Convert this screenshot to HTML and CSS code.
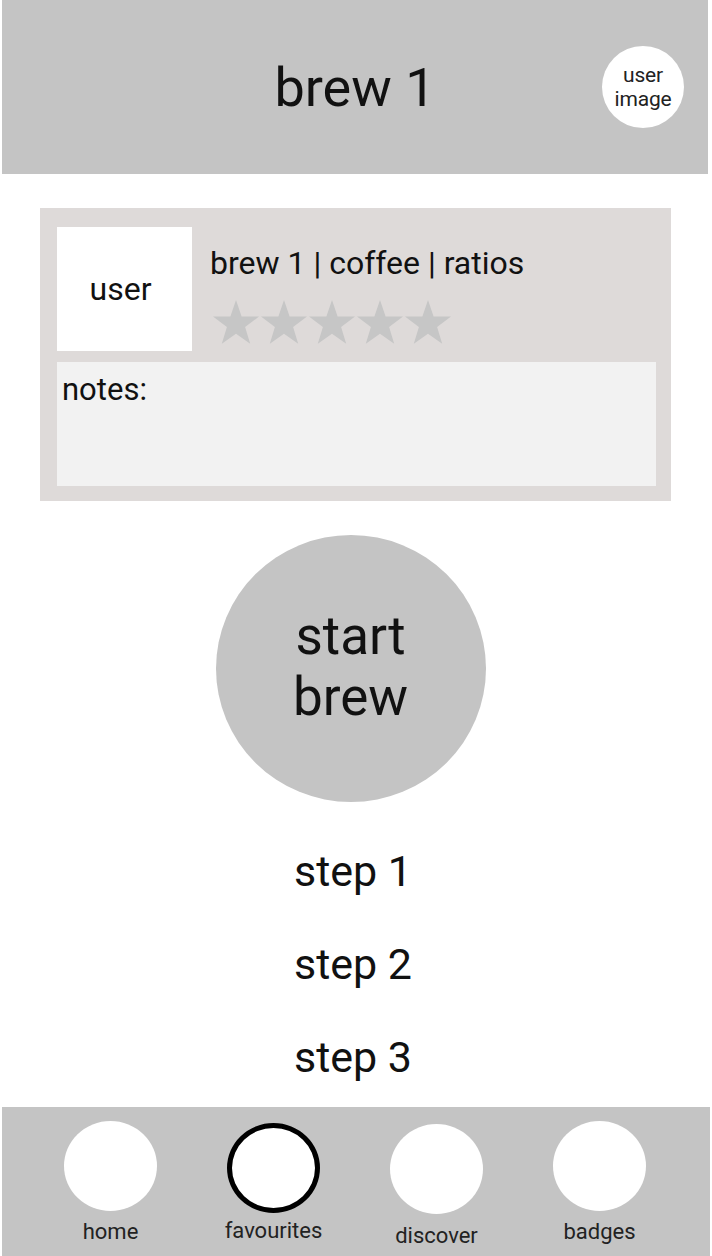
FILE: index.html
```html
<!DOCTYPE html>
<html>
<head>
<meta charset="utf-8">
<link rel="stylesheet" href="styles.css">
</head>
<body>
<div class="page">
  <header class="header">
    <div class="spacer"></div>
    <h1 class="title">brew 1</h1>
    <div class="avatar">user<br>image</div>
  </header>

  <section class="card">
    <div class="card-top">
      <div class="user-box">user</div>
      <div class="info">
        <div class="tags">brew 1 | coffee | ratios</div>
        <div class="stars">
          <svg class="star" viewBox="0 0 48 46"><polygon points="24,1 29.6,17.5 47,17.6 33.1,28.1 38.2,44.8 24,34.7 9.8,44.8 14.9,28.1 1,17.6 18.4,17.5"/></svg>
          <svg class="star" viewBox="0 0 48 46"><polygon points="24,1 29.6,17.5 47,17.6 33.1,28.1 38.2,44.8 24,34.7 9.8,44.8 14.9,28.1 1,17.6 18.4,17.5"/></svg>
          <svg class="star" viewBox="0 0 48 46"><polygon points="24,1 29.6,17.5 47,17.6 33.1,28.1 38.2,44.8 24,34.7 9.8,44.8 14.9,28.1 1,17.6 18.4,17.5"/></svg>
          <svg class="star" viewBox="0 0 48 46"><polygon points="24,1 29.6,17.5 47,17.6 33.1,28.1 38.2,44.8 24,34.7 9.8,44.8 14.9,28.1 1,17.6 18.4,17.5"/></svg>
          <svg class="star" viewBox="0 0 48 46"><polygon points="24,1 29.6,17.5 47,17.6 33.1,28.1 38.2,44.8 24,34.7 9.8,44.8 14.9,28.1 1,17.6 18.4,17.5"/></svg>
        </div>
      </div>
    </div>
    <div class="notes">notes:</div>
  </section>

  <div class="start-wrap">
    <button class="start">start<br>brew</button>
  </div>

  <ol class="steps">
    <li>step 1</li>
    <li>step 2</li>
    <li>step 3</li>
  </ol>

  <nav class="nav">
    <div class="nav-item"><span class="nav-icon"></span><span class="nav-label">home</span></div>
    <div class="nav-item item-fav"><span class="nav-icon active"></span><span class="nav-label">favourites</span></div>
    <div class="nav-item item-discover"><span class="nav-icon"></span><span class="nav-label">discover</span></div>
    <div class="nav-item"><span class="nav-icon"></span><span class="nav-label">badges</span></div>
  </nav>
</div>
</body>
</html>
```

FILE: styles.css
```css
* { box-sizing: border-box; }
html, body { margin: 0; padding: 0; background: #ffffff; }
body {
  font-family: Roboto, "Liberation Sans", sans-serif;
  color: #111111;
}
.page {
  width: 712px;
  height: 1256px;
  display: flex;
  flex-direction: column;
  overflow: hidden;
}
.header {
  margin: 0 4px 0 2px;
  height: 174px;
  background: #c4c4c4;
  display: grid;
  grid-template-columns: 1fr auto 1fr;
  align-items: center;
}
.title {
  margin: 0;
  font-weight: 400;
  font-size: 54px;
  line-height: 60px;
  padding-top: 2px;
  color: #111;
}
.avatar {
  justify-self: end;
  margin-right: 24px;
  width: 82px;
  height: 82px;
  border-radius: 50%;
  background: #ffffff;
  display: flex;
  align-items: center;
  justify-content: center;
  text-align: center;
  font-size: 21px;
  line-height: 24px;
  letter-spacing: -0.2px;
  color: #222;
}
.card {
  margin: 34px 0 0 40px;
  width: 631px;
  height: 293px;
  background: #dedad9;
  padding: 19px 15px 15px 17px;
  display: flex;
  flex-direction: column;
  gap: 11px;
}
.card-top {
  display: flex;
  gap: 18px;
  height: 124px;
}
.user-box {
  width: 135px;
  height: 124px;
  background: #ffffff;
  display: flex;
  align-items: center;
  justify-content: center;
  padding-right: 8px;
  font-size: 32px;
  color: #111;
}
.info {
  display: flex;
  flex-direction: column;
  padding-top: 18px;
}
.tags {
  font-size: 32px;
  line-height: 36px;
  color: #111;
}
.stars {
  display: flex;
  margin-top: 18px;
  margin-left: 2px;
}
.star {
  width: 48px;
  height: 46px;
  fill: #c6c6c6;
}
.notes {
  height: 124px;
  width: 599px;
  background: #f2f2f2;
  padding: 11px 5px;
  font-size: 31px;
  line-height: 34px;
  color: #111;
}
.start-wrap {
  display: flex;
  justify-content: center;
  margin-top: 34px;
  padding-right: 11px;
}
.start {
  width: 270px;
  height: 267px;
  border-radius: 50%;
  border: none;
  background: #c4c4c4;
  font-family: Roboto, "Liberation Sans", sans-serif;
  font-size: 53px;
  line-height: 61px;
  color: #111;
  padding: 0 0 4px 0;
}
.steps {
  list-style: none;
  margin: 45px 0 0 0;
  padding: 0 6px 0 0;
  display: flex;
  flex-direction: column;
  align-items: center;
  gap: 45px;
}
.steps li {
  font-size: 43px;
  line-height: 48px;
  color: #111;
}
.nav {
  margin: auto 2px 0 2px;
  height: 149px;
  background: #c4c4c4;
  display: flex;
  padding: 14px 0 0 62px;
  gap: 70px;
}
.nav-item {
  display: flex;
  flex-direction: column;
  align-items: center;
  width: 93px;
}
.nav-icon {
  width: 93px;
  height: 90px;
  border-radius: 50%;
  background: #ffffff;
}
.nav-icon.active {
  border: 5px solid #000;
  margin-top: 2px;
}
.item-fav .nav-label { margin-top: 6px; }
.item-discover .nav-icon { margin-top: 3px; }
.item-discover .nav-label { margin-top: 10px; }
.nav-label {
  margin-top: 9px;
  font-size: 22px;
  line-height: 24px;
  color: #222;
  white-space: nowrap;
}
```
